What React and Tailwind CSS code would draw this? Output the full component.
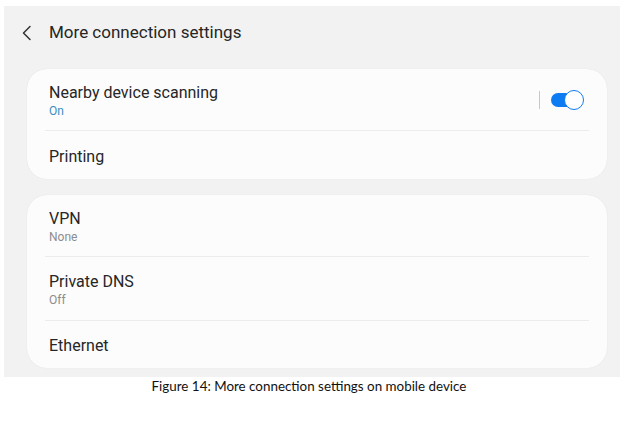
import React from 'react';

const rowText = "text-[16px] leading-[20px] text-[#262626]";

function Row({ title, sub, subClass = 'text-[#8c8c8c]', right, height = 'h-[62px]', divider = true }) {
  return (
    <div className={`${height} flex items-center ${divider ? 'border-b border-[#ececec]' : ''}`}>
      <div className="flex-1 flex flex-col pl-[4px] pt-[3px]">
        <span className={rowText}>{title}</span>
        {sub && <span className={`text-[12px] leading-[16px] ${subClass}`}>{sub}</span>}
      </div>
      {right}
    </div>
  );
}

function Toggle() {
  return (
    <div className="flex items-center pr-[5px]">
      <div className="w-px h-[18px] bg-[#c8c8c8] mr-[11px]" />
      <div className="relative w-[33px] h-[20px]">
        <div className="absolute left-0 top-[3px] w-[26px] h-[14px] rounded-full bg-[#0d7cf2]" />
        <div className="absolute right-0 top-0 w-[20px] h-[20px] rounded-full bg-white border-[1.5px] border-[#0d7cf2]" />
      </div>
    </div>
  );
}

export default function App() {
  return (
    <div className="w-[641px] h-[425px] bg-white pt-[6px] pl-[4px] pr-[21px]" style={{ fontFamily: 'Roboto, "Noto Sans", sans-serif' }}>
      <div className="h-[371px] bg-[#f2f2f2] pl-[23px] pr-[13px]">
        <div className="h-[63px] flex items-center -ml-[23px] pl-[15px] pb-[10px]">
          <svg width="16" height="16" viewBox="0 0 16 16" fill="none" className="mr-[14px]">
            <path d="M11 1.5 L4.5 8 L11 14.5" stroke="#333" strokeWidth="1.5" strokeLinecap="round" strokeLinejoin="round" />
          </svg>
          <span className="text-[17px] text-[#262626]">More connection settings</span>
        </div>

        <div className="bg-[#fcfcfc] rounded-[20px] px-[18px] shadow-[0_0_1px_rgba(0,0,0,0.12)]">
          <Row title="Nearby device scanning" sub="On" subClass="text-[#3b8ec2]" right={<Toggle />} />
          <Row title="Printing" height="h-[48px]" divider={false} />
        </div>

        <div className="mt-[16px] bg-[#fcfcfc] rounded-[20px] px-[18px] shadow-[0_0_1px_rgba(0,0,0,0.12)]">
          <Row title="VPN" sub="None" />
          <Row title="Private DNS" sub="Off" height="h-[64px]" />
          <Row title="Ethernet" height="h-[47px]" divider={false} />
        </div>
      </div>
      <p className="text-center text-[13.4px] leading-[18px] mt-[0px] text-[#111] pr-[6px]" style={{ fontFamily: 'Lato, sans-serif' }}>
        Figure 14: More connection settings on mobile device
      </p>
    </div>
  );
}
